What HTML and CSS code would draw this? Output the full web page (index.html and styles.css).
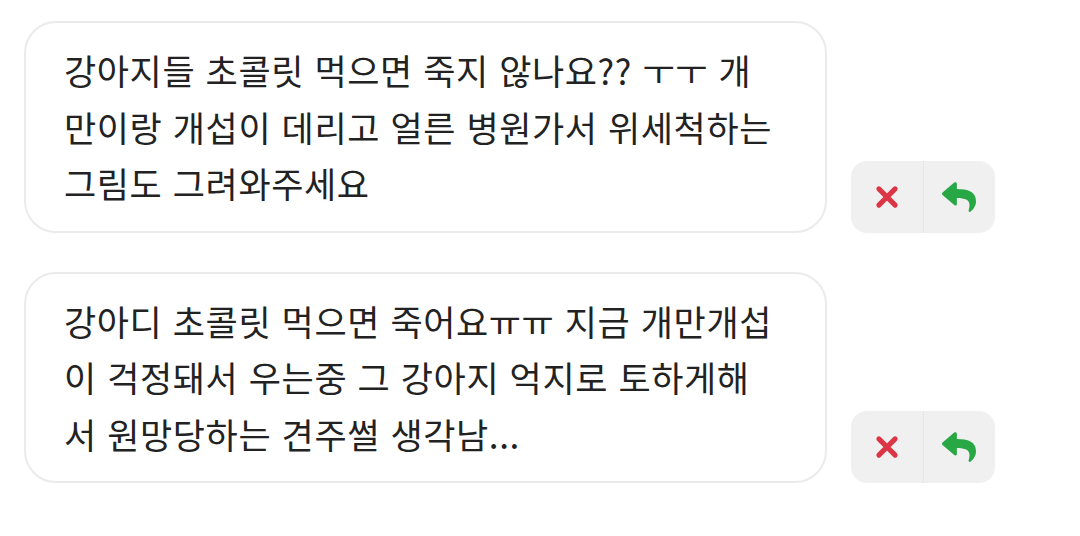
FILE: index.html
```html
<!DOCTYPE html>
<html lang="ko">
<head>
    <meta charset="UTF-8">
    <meta name="viewport" content="width=device-width, initial-scale=1.0">
    <title>Messages</title>
    <link rel="stylesheet" href="styles.css">
</head>
<body>
    <div class="list">
        <div class="row">
            <div class="bubble">강아지들 초콜릿 먹으면 죽지 않나요?? ㅜㅜ 개<br>만이랑 개섭이 데리고 얼른 병원가서 위세척하는<br>그림도 그려와주세요</div>
            <div class="actions">
                <button class="action">
                    <svg width="26" height="26" viewBox="0 0 24 24"><path d="M4.5 4.5L19.5 19.5M19.5 4.5L4.5 19.5" stroke="#dc3545" stroke-width="4.6" stroke-linecap="round"/></svg>
                </button>
                <button class="action">
                    <svg width="34" height="34" viewBox="0 0 512 512"><path fill="#28a745" d="M8.309 189.836L184.313 37.851C199.719 24.546 224 35.347 224 56.015v80.053c160.629 1.839 288 34.032 288 186.258 0 61.441-39.581 122.309-83.333 154.132-13.653 9.931-33.111-2.533-28.077-18.631 45.344-145.012-21.507-183.51-176.59-185.742V360c0 20.7-24.3 31.453-39.687 18.164l-176.004-152c-11.071-9.562-11.086-26.753 0-36.328z"/></svg>
                </button>
            </div>
        </div>

        <div class="row">
            <div class="bubble">강아디 초콜릿 먹으면 죽어요ㅠㅠ 지금 개만개섭<br>이 걱정돼서 우는중 그 강아지 억지로 토하게해<br>서 원망당하는 견주썰 생각남...</div>
            <div class="actions">
                <button class="action">
                    <svg width="26" height="26" viewBox="0 0 24 24"><path d="M4.5 4.5L19.5 19.5M19.5 4.5L4.5 19.5" stroke="#dc3545" stroke-width="4.6" stroke-linecap="round"/></svg>
                </button>
                <button class="action">
                    <svg width="34" height="34" viewBox="0 0 512 512"><path fill="#28a745" d="M8.309 189.836L184.313 37.851C199.719 24.546 224 35.347 224 56.015v80.053c160.629 1.839 288 34.032 288 186.258 0 61.441-39.581 122.309-83.333 154.132-13.653 9.931-33.111-2.533-28.077-18.631 45.344-145.012-21.507-183.51-176.59-185.742V360c0 20.7-24.3 31.453-39.687 18.164l-176.004-152c-11.071-9.562-11.086-26.753 0-36.328z"/></svg>
                </button>
            </div>
        </div>
    </div>
</body>
</html>
```

FILE: styles.css
```css
body {
    margin: 0;
    background: #ffffff;
    font-family: "Noto Sans CJK KR", "Noto Sans", sans-serif;
    color: #222222;
}
.list {
    display: flex;
    flex-direction: column;
    gap: 39px;
    padding: 21px 0 0 24px;
}
.row {
    display: flex;
    align-items: flex-end;
    gap: 24px;
}
.bubble {
    width: 725px;
    padding: 19px 36px 19px 38px;
    border: 2px solid #ebebeb;
    border-radius: 32px;
    font-size: 35px;
    letter-spacing: 0.6px;
    line-height: 56.5px;
    white-space: nowrap;
    background: #fff;
}
.actions {
    display: flex;
    width: 144px;
    height: 72px;
    border-radius: 16px;
    overflow: hidden;
    background: #f0f0f0;
}
.action {
    flex: 1;
    border: none;
    background: transparent;
    display: flex;
    align-items: center;
    justify-content: center;
    padding: 0;
}
.action + .action {
    border-left: 1px solid #e6e6e6;
}
```
